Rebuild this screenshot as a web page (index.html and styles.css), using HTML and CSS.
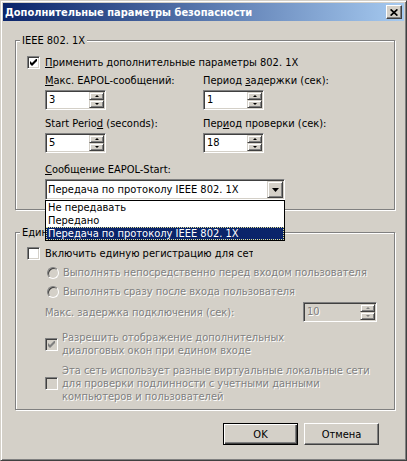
FILE: index.html
```html
<!doctype html>
<html>
<head>
<meta charset="utf-8">
<title>Дополнительные параметры безопасности</title>
<link rel="stylesheet" href="styles.css">
</head>
<body>
<div class="window">
	<div class="titlebar">
		<span class="title">Дополнительные параметры безопасности</span>
		<span class="close"><svg width="8" height="7" viewBox="0 0 8 7"><path d="M0.6 0.4L7.4 6.6M7.4 0.4L0.6 6.6" stroke="#000" stroke-width="1.7"/></svg></span>
	</div>

	<!-- IEEE 802.1X -->
	<div class="group g1">
		<span class="legend">IEEE 802. 1X</span>
		<div class="check">
			<span class="cb"><svg width="7" height="7" viewBox="0 0 7 7"><polygon points="0,2 2,4 7,-1 7,2 2,7 0,5"/></svg></span>
			<span><u>П</u>рименить дополнительные параметры 802. 1X</span>
		</div>
		<div class="fields">
			<div class="field">
				<div class="lbl"><u>М</u>акс. EAPOL-сообщений:</div>
				<div class="spin"><span class="val">3</span><span class="arrows"><i class="up"></i><i class="dn"></i></span></div>
			</div>
			<div class="field">
				<div class="lbl">Период <u>з</u>адержки (сек):</div>
				<div class="spin"><span class="val">1</span><span class="arrows"><i class="up"></i><i class="dn"></i></span></div>
			</div>
			<div class="field">
				<div class="lbl">Start Perio<u>d</u> (seconds):</div>
				<div class="spin"><span class="val">5</span><span class="arrows"><i class="up"></i><i class="dn"></i></span></div>
			</div>
			<div class="field">
				<div class="lbl">Пер<u>и</u>од проверки (сек):</div>
				<div class="spin"><span class="val">18</span><span class="arrows"><i class="up"></i><i class="dn"></i></span></div>
			</div>
		</div>
		<div class="lbl msg"><u>С</u>ообщение EAPOL-Start:</div>
		<div class="combo-wrap">
			<div class="combo">
				<span class="combo-text">Передача по протоколу IEEE 802. 1X</span>
				<span class="drop"><svg width="7" height="4" viewBox="0 0 7 4"><polygon points="0,0 7,0 3.5,4"/></svg></span>
			</div>
			<ul class="list">
				<li>Не передавать</li>
				<li>Передано</li>
				<li class="sel">Передача по протоколу IEEE 802. 1X</li>
			</ul>
		</div>
	</div>

	<!-- единая регистрация -->
	<div class="group g2">
		<span class="legend">Единая регистрация</span>
		<div class="check">
			<span class="cb"></span>
			<span class="clip">Включить единую регистрацию для сети</span>
		</div>
		<div class="radio first">
			<span class="rb"></span>
			<span class="off">Выполнять непосредственно перед входом пользователя</span>
		</div>
		<div class="radio">
			<span class="rb"></span>
			<span class="off">Выполнять сразу после входа пользователя</span>
		</div>
		<div class="delay">
			<span class="off">Макс. задержка подключения (сек):</span>
			<div class="spin disabled"><span class="val">10</span><span class="arrows"><i class="up"></i><i class="dn"></i></span></div>
		</div>
		<div class="check sub c3">
			<span class="cb disabled"><svg width="7" height="7" viewBox="0 0 7 7"><polygon points="0,2 2,4 7,-1 7,2 2,7 0,5" fill="#808080"/></svg></span>
			<span class="off">Разрешить отображение дополнительных<br>диалоговых окон при едином входе</span>
		</div>
		<div class="check sub c4">
			<span class="cb disabled"></span>
			<span class="off">Эта сеть использует разные виртуальные локальные сети<br>для проверки подлинности с учетными данными<br>компьютеров и пользователей</span>
		</div>
	</div>

	<div class="buttons">
		<button class="btn default">OK</button>
		<button class="btn">Отмена</button>
	</div>
</div>
</body>
</html>
```

FILE: styles.css
```css
*{
	margin: 0;
	padding: 0;
	box-sizing: border-box;
}
body{
	background: #d4d0c8;
	font: 11px/13px "DejaVu Sans Condensed", "Liberation Sans", Arial, sans-serif;
	color: #000;
	white-space: nowrap;
}
.window{
	width: 407px;
	height: 461px;
	overflow: hidden;
	background: #d4d0c8;
	border: 1px solid;
	border-color: #d4d0c8 #404040 #404040 #d4d0c8;
	box-shadow: inset 1px 1px #fff, inset -1px -1px #808080;
	padding: 2px;
}
.titlebar{
	height: 18px;
	display: flex;
	align-items: center;
	justify-content: space-between;
	padding: 0 2px;
	background: linear-gradient(to right, #0a246a, #a6caf0);
	color: #fff;
	font-weight: bold;
}
.close{
	width: 16px;
	height: 14px;
	display: flex;
	align-items: center;
	justify-content: center;
	background: #d4d0c8;
	border: 1px solid;
	border-color: #fff #404040 #404040 #fff;
	box-shadow: inset -1px -1px #808080;
}
.close svg{
	display: block;
}

/* рамки групп */
.group{
	position: relative;
	border: 1px solid #808080;
	box-shadow: inset 1px 1px #fff, 1px 1px #fff;
	margin: 19px 9px 0 12px;
	padding: 15px 11px 9px;
}
.g2{
	margin-top: 22px;
	padding-top: 14px;
	padding-bottom: 6px;
}
.legend{
	position: absolute;
	top: -7px;
	left: 4px;
	padding: 0 2px;
	background: #d4d0c8;
}
.off{
	color: #808080;
	text-shadow: 1px 1px #fff;
}

/* чекбоксы */
.check{
	display: flex;
	align-items: center;
	gap: 5px;
}
.cb{
	width: 13px;
	height: 13px;
	flex: none;
	background: #fff;
	border: 1px solid;
	border-color: #808080 #fff #fff #808080;
	box-shadow: inset 1px 1px #404040, inset -1px -1px #d4d0c8;
	padding: 2px;
}
.cb svg{
	display: block;
}
.cb.disabled{
	background: #d4d0c8;
}
.clip{
	width: 208px;
	overflow: hidden;
}
.sub{
	padding-left: 18px;
	gap: 4px;
}
.c3{
	margin-top: 9px;
}
.c4{
	margin-top: 7px;
}

/* радио */
.radio{
	display: flex;
	align-items: center;
	gap: 4px;
	padding-left: 20px;
	margin-top: 6px;
}
.rb{
	width: 12px;
	height: 12px;
	flex: none;
	border-radius: 50%;
	background: #d4d0c8;
	border: 1px solid;
	border-color: #808080 #fff #fff #808080;
	box-shadow: inset 1px 1px #404040, inset -1px -1px #d4d0c8;
}

/* поля со счетчиком */
.fields{
	display: grid;
	grid-template-columns: 158px 1fr;
	row-gap: 7px;
	padding-left: 18px;
	margin-top: 5px;
}
.lbl{
	margin-bottom: 3px;
}
.msg{
	margin: 10px 0 3px 18px;
}
.spin{
	display: flex;
	width: 61px;
	height: 20px;
	background: #fff;
	border: 1px solid;
	border-color: #808080 #fff #fff #808080;
	box-shadow: inset 1px 1px #404040, inset -1px -1px #d4d0c8;
	padding: 1px;
}
.spin .val{
	flex: 1;
	padding-left: 2px;
	line-height: 16px;
}
.spin.disabled{
	width: 74px;
	background: #d4d0c8;
}
.spin.disabled .val{
	color: #808080;
	text-shadow: 1px 1px #fff;
}
.arrows{
	display: flex;
	flex-direction: column;
	width: 15px;
}
.arrows i{
	flex: 1;
	display: flex;
	align-items: center;
	justify-content: center;
	background: #d4d0c8;
	border: 1px solid;
	border-color: #d4d0c8 #404040 #404040 #d4d0c8;
	box-shadow: inset 1px 1px #fff, inset -1px -1px #808080;
}
.arrows i::after{
	content: "";
	border-left: 2px solid transparent;
	border-right: 2px solid transparent;
}
.arrows .up::after{
	border-bottom: 2px solid #000;
}
.arrows .dn::after{
	border-top: 2px solid #000;
}
.spin.disabled .up::after{
	border-bottom-color: #808080;
}
.spin.disabled .dn::after{
	border-top-color: #808080;
}
.delay{
	display: grid;
	grid-template-columns: 258px 74px;
	align-items: center;
	padding-left: 18px;
	margin-top: 4px;
}

/* выпадающий список */
.combo-wrap{
	position: relative;
	width: 240px;
	margin-left: 18px;
}
.combo{
	display: flex;
	height: 21px;
	background: #fff;
	border: 1px solid;
	border-color: #808080 #fff #fff #808080;
	box-shadow: inset 1px 1px #404040, inset -1px -1px #d4d0c8;
	padding: 1px;
}
.combo-text{
	flex: 1;
	padding-left: 1px;
	line-height: 17px;
}
.drop{
	width: 16px;
	display: flex;
	align-items: center;
	justify-content: center;
	background: #d4d0c8;
	border: 1px solid;
	border-color: #d4d0c8 #404040 #404040 #d4d0c8;
	box-shadow: inset 1px 1px #fff, inset -1px -1px #808080;
}
.drop svg{
	display: block;
}
.list{
	position: absolute;
	top: 100%;
	left: 0;
	width: 240px;
	background: #fff;
	border: 1px solid #000;
	list-style: none;
	z-index: 1;
}
.list li{
	height: 13px;
	padding-left: 2px;
}
.list .sel{
	background: #0a246a;
	color: #fff;
	outline: 1px dotted #e0e090;
	outline-offset: -1px;
}

/* кнопки */
.buttons{
	display: flex;
	justify-content: flex-end;
	gap: 6px;
	margin: 13px 25px 0 0;
}
.btn{
	width: 75px;
	height: 22px;
	font: inherit;
	color: #000;
	background: #d4d0c8;
	border: 1px solid;
	border-color: #fff #404040 #404040 #fff;
	box-shadow: inset -1px -1px #808080;
}
.btn.default{
	border-color: #000;
	box-shadow: inset 1px 1px #fff, inset -1px -1px #404040, inset -2px -2px #808080;
}
```
